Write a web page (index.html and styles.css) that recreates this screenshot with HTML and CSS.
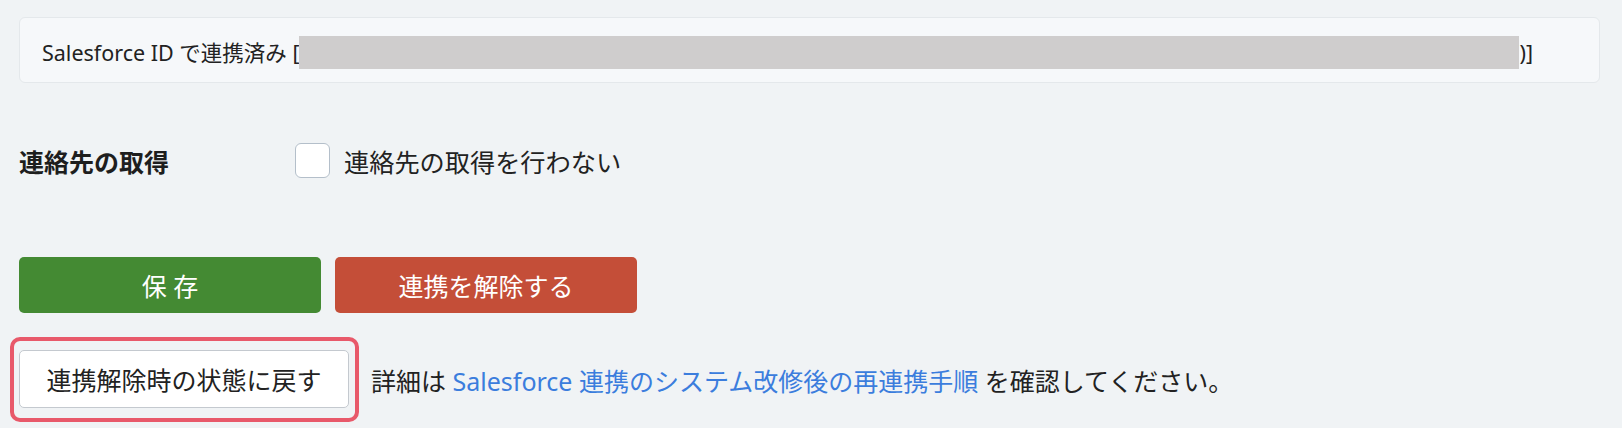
FILE: index.html
```html
<!DOCTYPE html>
<html lang="ja">
<head>
    <meta charset="UTF-8">
    <meta name="viewport" content="width=device-width, initial-scale=1.0">
    <title>Salesforce 連携設定</title>
    <link rel="stylesheet" href="styles.css">
</head>
<body>
    <div class="container">
        <div class="status-panel">
            <span>Salesforce ID で連携済み [</span>
            <span class="redacted"></span>
            <span>)]</span>
        </div>

        <div class="setting-row">
            <div class="setting-label">連絡先の取得</div>
            <label class="check">
                <input type="checkbox" id="skipContacts">
                <span>連絡先の取得を行わない</span>
            </label>
        </div>

        <div class="actions">
            <button type="button" class="btn btn-save">保 存</button>
            <button type="button" class="btn btn-unlink">連携を解除する</button>
        </div>

        <div class="restore-row">
            <div class="highlight">
                <button type="button" class="btn btn-default">連携解除時の状態に戻す</button>
            </div>
            <p class="note">詳細は <a href="#">Salesforce 連携のシステム改修後の再連携手順</a> を確認してください。</p>
        </div>
    </div>
</body>
</html>
```

FILE: styles.css
```css
body {
    font-family: "Noto Sans", "Noto Sans CJK JP", sans-serif;
    background-color: #f0f3f5;
    color: #222;
    margin: 0;
    padding: 0;
}
.container {
    padding: 17px 22px 0 19px;
}
.status-panel {
    display: flex;
    align-items: center;
    padding: 18px 22px 13px;
    background-color: #f6f8fa;
    border: 1px solid #e4e8eb;
    border-radius: 6px;
    font-size: 21.5px;
    line-height: 1;
}
.status-panel span {
    white-space: pre;
}
.redacted {
    display: block;
    width: 1220px;
    height: 33px;
    background-color: #cfcdcd;
}
.setting-row {
    display: flex;
    align-items: center;
    height: 35px;
    margin-top: 60px;
}
.setting-label {
    width: 276px;
    font-size: 25px;
    font-weight: bold;
    color: #1e1e1e;
}
.check {
    display: flex;
    align-items: center;
    font-size: 25.2px;
    cursor: pointer;
}
.check input {
    appearance: none;
    -webkit-appearance: none;
    width: 35px;
    height: 35px;
    margin: 0 14px 0 0;
    background-color: #fff;
    border: 1px solid #b4bfca;
    border-radius: 6px;
}
.actions {
    display: flex;
    gap: 14px;
    margin-top: 79px;
}
.btn {
    font-family: inherit;
    font-size: 25px;
    border-radius: 5px;
    cursor: pointer;
}
.btn-save,
.btn-unlink {
    width: 302px;
    height: 56px;
    color: #fff;
    border: none;
}
.btn-save {
    background-color: #448a33;
}
.btn-unlink {
    background-color: #c44e38;
}
.restore-row {
    display: flex;
    align-items: center;
    margin-top: 24px;
}
.highlight {
    margin-left: -9px;
    padding: 9px 6px 10px 5px;
    border: 4px solid #e8596a;
    border-radius: 10px;
}
.btn-default {
    display: block;
    width: 330px;
    height: 58px;
    color: #222;
    background-color: #fff;
    border: 1px solid #c4c9cf;
}
.note {
    margin: 0 0 0 12px;
    font-size: 25px;
}
.note a {
    color: #3b7ddd;
    text-decoration: none;
}
```
